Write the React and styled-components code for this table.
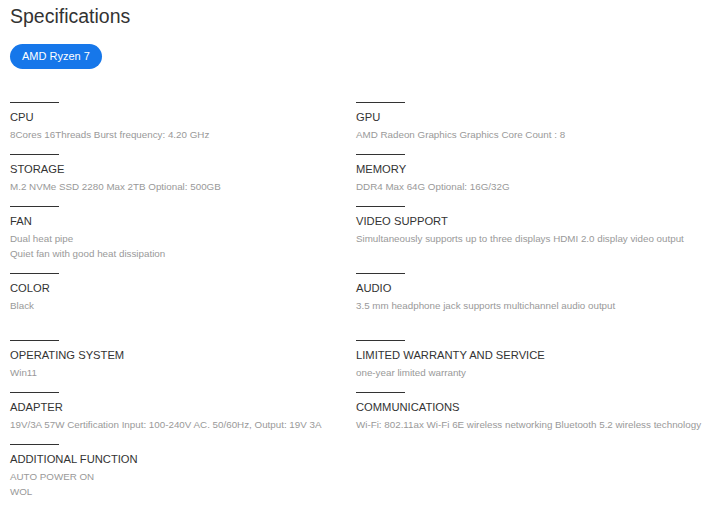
import React from 'react'
import styled, { createGlobalStyle } from 'styled-components'

const GlobalStyle = createGlobalStyle`
  body {
    margin: 0;
    background: #fff;
    font-family: 'Liberation Sans', Arial, sans-serif;
  }
`

const Page = styled.div`
  padding: 4px 10px 10px;
`

const Heading = styled.h1`
  margin: 0;
  font-size: 19.5px;
  line-height: 24px;
  font-weight: 400;
  color: #333;
`

const Chip = styled.button`
  display: inline-block;
  margin-top: 16px;
  height: 25px;
  padding: 0 12px;
  border: none;
  border-radius: 13px;
  background: #1677ea;
  color: #fff;
  font-family: inherit;
  font-size: 11px;
  line-height: 25px;
  cursor: pointer;
`

const SpecGrid = styled.div`
  display: grid;
  grid-template-columns: 346px 1fr;
  margin-top: 33px;
`

const SpecItem = styled.div`
  padding-bottom: ${(p) => (p.$tall ? 27 : 12)}px;
`

const Rule = styled.div`
  width: 49px;
  height: 1px;
  background: #333;
  margin-bottom: 8px;
`

const SpecTitle = styled.div`
  font-size: 11.2px;
  line-height: 13px;
  color: #333;
  margin-bottom: 3px;
`

const SpecValue = styled.div`
  font-size: 9.8px;
  line-height: 15px;
  color: #999;
`

const specs = [
  { title: 'CPU', lines: ['8Cores 16Threads Burst frequency: 4.20 GHz'] },
  { title: 'GPU', lines: ['AMD Radeon Graphics Graphics Core Count : 8'] },
  { title: 'STORAGE', lines: ['M.2 NVMe SSD 2280 Max 2TB Optional: 500GB'] },
  { title: 'MEMORY', lines: ['DDR4 Max 64G Optional: 16G/32G'] },
  { title: 'FAN', lines: ['Dual heat pipe', 'Quiet fan with good heat dissipation'] },
  { title: 'VIDEO SUPPORT', lines: ['Simultaneously supports up to three displays HDMI 2.0 display video output'] },
  { title: 'COLOR', lines: ['Black'], tall: true },
  { title: 'AUDIO', lines: ['3.5 mm headphone jack supports multichannel audio output'], tall: true },
  { title: 'OPERATING SYSTEM', lines: ['Win11'] },
  { title: 'LIMITED WARRANTY AND SERVICE', lines: ['one-year limited warranty'] },
  { title: 'ADAPTER', lines: ['19V/3A 57W Certification Input: 100-240V AC. 50/60Hz, Output: 19V 3A'] },
  { title: 'COMMUNICATIONS', lines: ['Wi-Fi: 802.11ax Wi-Fi 6E wireless networking Bluetooth 5.2 wireless technology'] },
  { title: 'ADDITIONAL FUNCTION', lines: ['AUTO POWER ON', 'WOL'] }
]

const App = () => {
  return (
    <Page>
      <GlobalStyle />
      <Heading>Specifications</Heading>
      <Chip>AMD Ryzen 7</Chip>
      <SpecGrid>
        {specs.map((s) => (
          <SpecItem key={s.title} $tall={s.tall}>
            <Rule />
            <SpecTitle>{s.title}</SpecTitle>
            {s.lines.map((l) => (
              <SpecValue key={l}>{l}</SpecValue>
            ))}
          </SpecItem>
        ))}
      </SpecGrid>
    </Page>
  )
}

export default App
